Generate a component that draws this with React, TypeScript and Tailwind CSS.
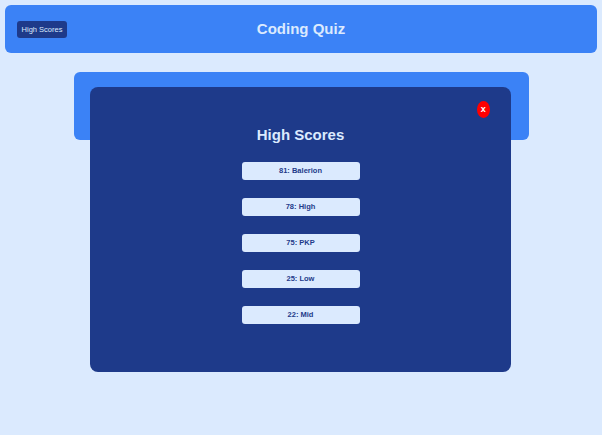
import React from "react";

const scores = ["81: Balerion", "78: High", "75: PKP", "25: Low", "22: Mid"];

export default function App() {
  return (
    <div
      className="relative min-h-[435px] w-full bg-[#dbeafe] p-[5px]"
      style={{ fontFamily: '"Liberation Sans", Arial, sans-serif' }}
    >
      <header className="relative flex h-[48px] items-center justify-center rounded-[6px] bg-[#3b82f6]">
        <button className="absolute left-[12px] top-[16px] flex h-[17px] w-[50px] items-center justify-center rounded-[3px] bg-[#1e3a8a] text-[7.5px] text-[#dbeafe]">
          High Scores
        </button>
        <h1 className="text-[15px] font-bold text-[#dbeafe]">Coding Quiz</h1>
      </header>

      <div className="mx-auto mt-[19px] h-[68px] w-[455px] rounded-[6px] bg-[#3b82f6]" />

      <div className="absolute left-[90px] top-[87px] flex h-[285px] w-[421px] flex-col items-center rounded-[8px] bg-[#1e3a8a]">
        <button className="absolute right-[21px] top-[14px] flex h-[17px] w-[13.5px] items-center justify-center rounded-[50%] bg-[#ff0000] text-[9px] font-bold leading-none text-white">
          x
        </button>
        <h2 className="mt-[39px] text-[15px] font-bold leading-[18px] text-[#dbeafe]">
          High Scores
        </h2>
        <ul className="mt-[18px] flex flex-col gap-[18px]">
          {scores.map((s) => (
            <li
              key={s}
              className="flex h-[18px] w-[118px] items-center justify-center rounded-[3px] bg-[#dbeafe] text-[7.5px] font-bold text-[#1e3a8a]"
            >
              {s}
            </li>
          ))}
        </ul>
      </div>
    </div>
  );
}
